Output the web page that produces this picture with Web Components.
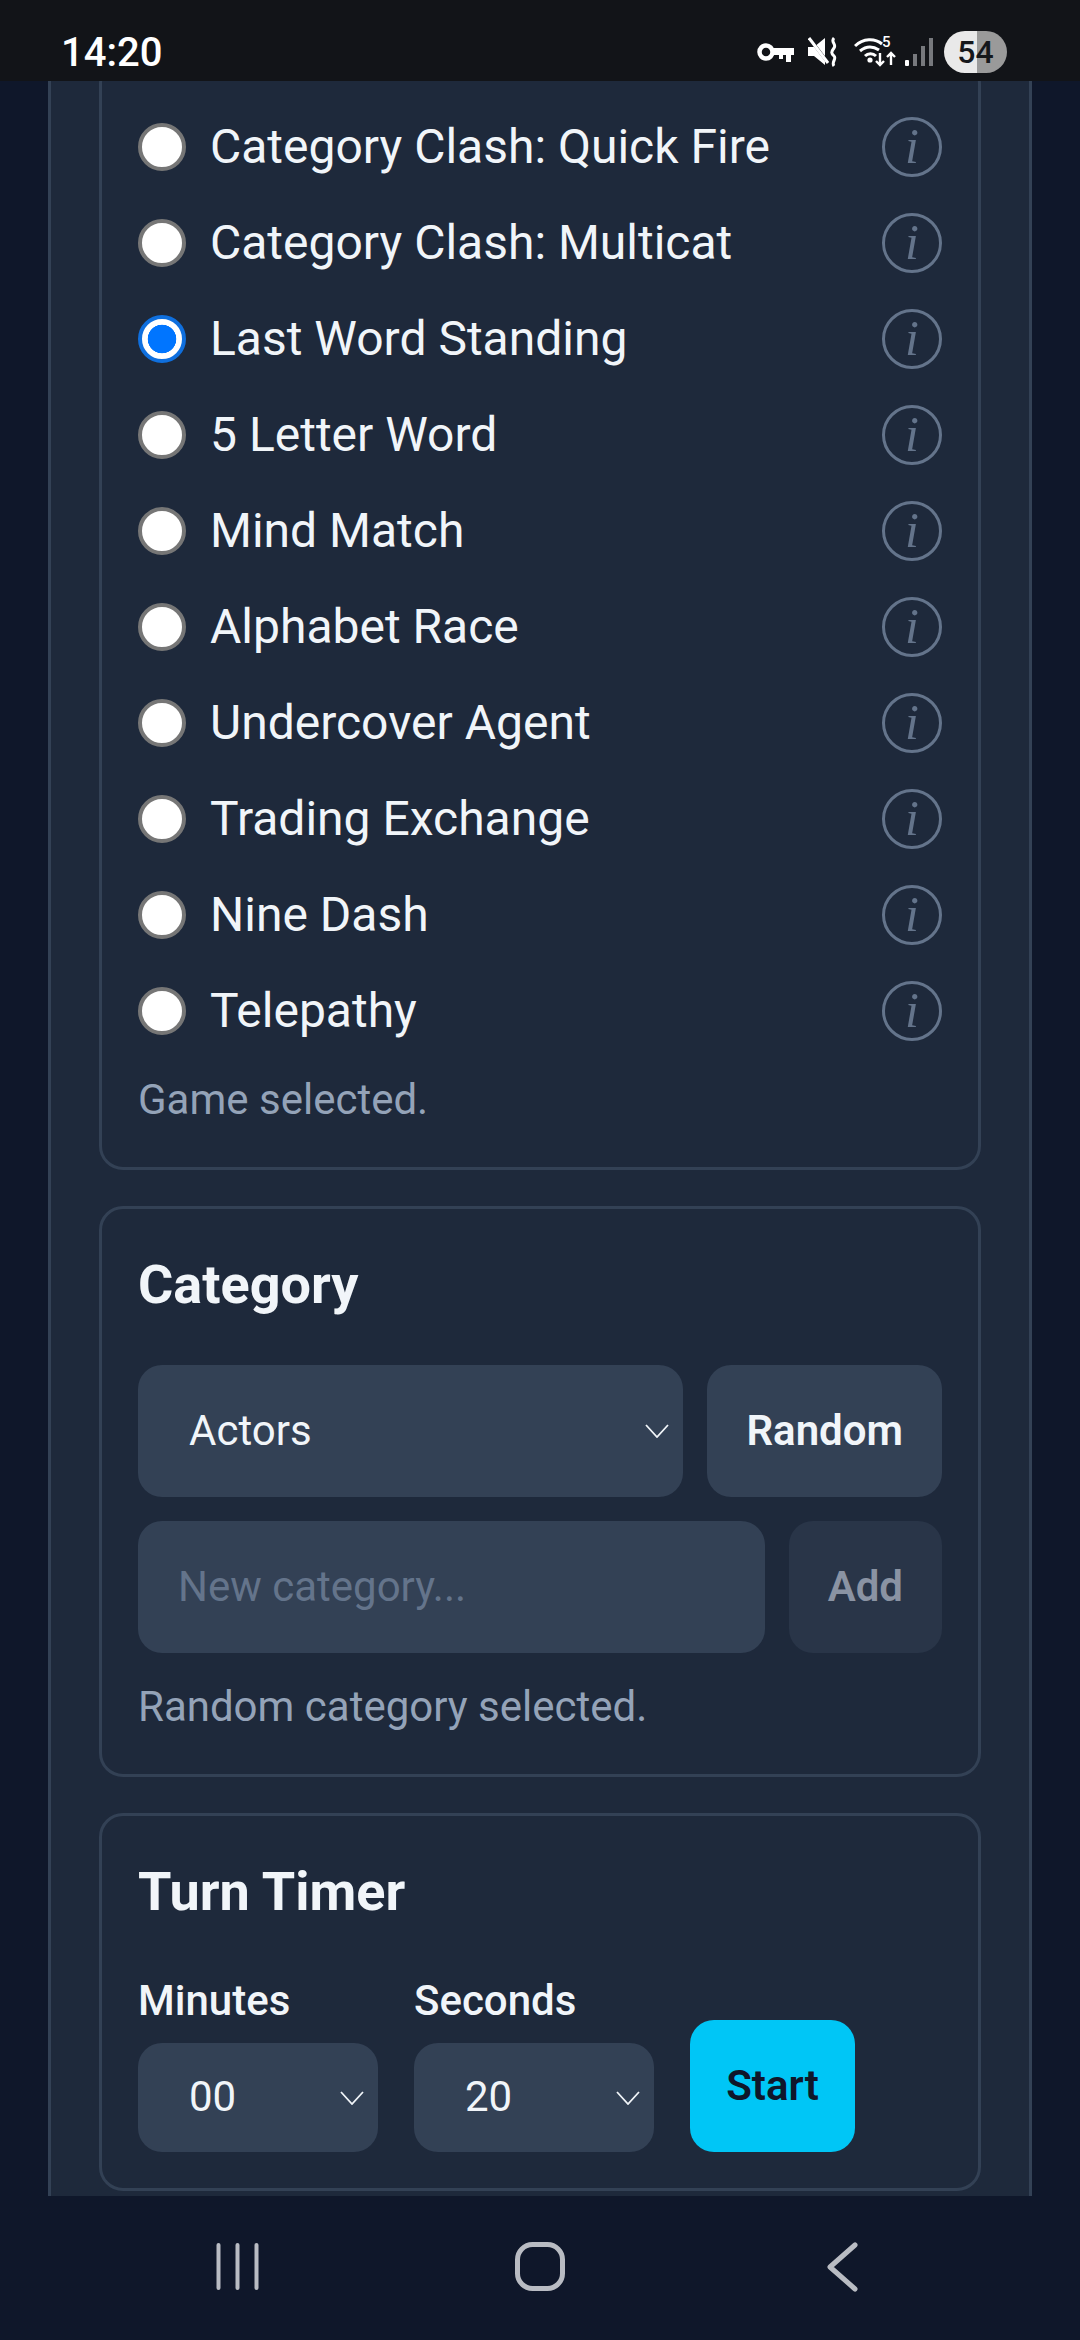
<!DOCTYPE html>
<html>
<head>
<meta charset="utf-8">
<title>Game setup</title>
<style>
	html, body {
		margin: 0;
		height: 2340px;
		overflow: hidden;
		background: #0f172a;
		font-family: Roboto, "Liberation Sans", sans-serif;
	}

	body {
		display: flex;
		flex-direction: column;
	}
</style>
</head>
<body>
	<status-bar></status-bar>
	<setup-screen>
		<info-card note="Game selected.">
			<game-option>Category Clash: Quick Fire</game-option>
			<game-option>Category Clash: Multicat</game-option>
			<game-option checked>Last Word Standing</game-option>
			<game-option>5 Letter Word</game-option>
			<game-option>Mind Match</game-option>
			<game-option>Alphabet Race</game-option>
			<game-option>Undercover Agent</game-option>
			<game-option>Trading Exchange</game-option>
			<game-option>Nine Dash</game-option>
			<game-option>Telepathy</game-option>
		</info-card>
		<info-card heading="Category" note="Random category selected.">
			<category-form></category-form>
		</info-card>
		<info-card heading="Turn Timer">
			<turn-timer></turn-timer>
		</info-card>
	</setup-screen>
	<nav-bar></nav-bar>

<script>
class StatusBar extends HTMLElement {
	constructor() {
		super();
		this.attachShadow({ mode: 'open' });
	}

	connectedCallback() {
		this.shadowRoot.innerHTML = `
			<style>
				:host {
					display: flex;
					flex: none;
					align-items: center;
					height: 81px;
					padding: 23px 73px 0 61px;
					box-sizing: border-box;
					background: #121418;
					color: #fff;
				}

				.time {
					font-size: 40px;
					font-weight: 500;
					flex: 1;
				}

				svg {
					display: block;
				}

				.icons {
					display: flex;
					align-items: center;
				}

				.wifi {
					position: relative;
					width: 42px;
					height: 34px;
					margin-right: 9px;
				}

				/* wifi generation digit sits over the icon corner */
				.wifi span {
					position: absolute;
					left: 28px;
					top: 0;
					font-size: 15px;
					font-weight: 500;
					line-height: 15px;
				}

				.battery {
					width: 63px;
					height: 42px;
					margin-left: 11px;
					border-radius: 21px;
					background: linear-gradient(90deg, #e9e9e9 52%, #9a9a9a 52%);
					color: #15171b;
					font-size: 32px;
					font-weight: 500;
					line-height: 42px;
					text-align: center;
				}
			</style>
			<span class="time">14:20</span>
			<div class="icons">
				<svg width="37" height="19" viewBox="0 0 37 19" style="margin-right:14px">
					<circle cx="9" cy="9" r="6.500" fill="none" stroke="#fff" stroke-width="4.500"/>
					<path d="M15 5h22v7h-3v7h-5v-7h-3v4h-4v-4h-7z" fill="#fff"/>
				</svg>
				<svg width="30" height="30" viewBox="0 0 30 30" style="margin-right:16px">
					<path d="M0 10h6l11-9v27L6 19H0z" fill="#fff"/>
					<path d="M2 2l19 25" stroke="#121418" stroke-width="3"/>
					<path d="M1 1l19 25" stroke="#fff" stroke-width="3"/>
					<path d="M26 1c-4 4 3 6 0 10s-3 5 0 8-3 6 0 10" fill="none" stroke="#fff" stroke-width="3"/>
				</svg>
				<div class="wifi">
					<svg width="42" height="34" viewBox="0 0 42 34">
						<path d="M1 11c8-8 20-8 27-2M6 16c6-5 13-5 19-1M11 21c3-3 8-3 11 0" fill="none" stroke="#fff" stroke-width="3"/>
						<circle cx="16" cy="25" r="2.600" fill="#fff"/>
						<path d="M26 18v12M22 26l4 4 4-4M37 30V18M33 22l4-4 4 4" fill="none" stroke="#fff" stroke-width="2.400"/>
					</svg>
					<span>5</span>
				</div>
				<svg width="28" height="30" viewBox="0 0 28 30">
					<rect x="0" y="23" width="4" height="6" rx="1" fill="#fff"/>
					<rect x="8" y="17" width="4" height="12" fill="#77797d"/>
					<rect x="16" y="9" width="4" height="20" fill="#77797d"/>
					<rect x="24" y="1" width="4" height="28" fill="#77797d"/>
				</svg>
				<div class="battery">54</div>
			</div>
		`;
	}
}

class SetupScreen extends HTMLElement {
	constructor() {
		super();
		this.attachShadow({ mode: 'open' });
	}

	connectedCallback() {
		// the list is scrolled, so the first card starts above the fold
		this.shadowRoot.innerHTML = `
			<style>
				:host {
					display: block;
					flex: none;
					height: 2115px;
					overflow: hidden;
					padding: 0 48px;
					box-sizing: border-box;
					background: #0f172a;
				}

				.panel {
					display: flex;
					flex-direction: column;
					gap: 36px;
					margin-top: -21px;
					padding: 0 48px 60px;
					background: #1e293b;
					border: 3px solid #334155;
					border-top: 0;
				}
			</style>
			<div class="panel"><slot></slot></div>
		`;
	}
}

class InfoCard extends HTMLElement {
	constructor() {
		super();
		this.attachShadow({ mode: 'open' });
	}

	connectedCallback() {
		const heading = this.getAttribute('heading');
		const note = this.getAttribute('note');

		this.shadowRoot.innerHTML = `
			<style>
				:host {
					display: block;
					padding: 36px;
					background: #1e293b;
					border: 3px solid #334155;
					border-radius: 24px;
					color: #f1f5f9;
				}

				h2 {
					margin: 0 0 42px;
					padding-top: 1px;
					font-size: 54px;
					font-weight: 700;
					line-height: 77px;
				}

				p {
					margin: 12px 0 2px;
					color: #94a3b8;
					font-size: 42px;
					line-height: 58px;
				}

				:host([heading]) p {
					margin-top: 25px;
				}
			</style>
			${heading ? `<h2>${heading}</h2>` : ''}
			<slot></slot>
			${note ? `<p>${note}</p>` : ''}
		`;
	}
}

class GameOption extends HTMLElement {
	constructor() {
		super();
		this.attachShadow({ mode: 'open' });
	}

	connectedCallback() {
		this.shadowRoot.innerHTML = `
			<style>
				:host {
					display: flex;
					align-items: center;
					gap: 24px;
					height: 96px;
					font-size: 48px;
				}

				.radio {
					flex: none;
					width: 48px;
					height: 48px;
					box-sizing: border-box;
					border: 4px solid #767676;
					border-radius: 50%;
					background: #fff;
				}

				:host([checked]) .radio {
					border-color: #0f6fde;
					background: radial-gradient(circle, #0075ff 0 14px, #fff 14.6px);
				}

				.label {
					flex: 1;
					padding-bottom: 2px;
				}

				.info {
					flex: none;
					width: 60px;
					height: 60px;
					box-sizing: border-box;
					border: 3px solid #64748b;
					border-radius: 50%;
					color: #64748b;
					font: italic 50px/52px "Liberation Serif", serif;
					text-align: center;
				}
			</style>
			<span class="radio"></span>
			<span class="label"><slot></slot></span>
			<span class="info">i</span>
		`;
	}
}

class PickBox extends HTMLElement {
	constructor() {
		super();
		this.attachShadow({ mode: 'open' });
	}

	connectedCallback() {
		this.shadowRoot.innerHTML = `
			<style>
				:host {
					display: flex;
					align-items: center;
					box-sizing: border-box;
					padding: 0 14px 0 51px;
					background: #334155;
					border-radius: 24px;
					color: #f1f5f9;
					font-size: 42px;
				}

				.text {
					flex: 1;
					padding-bottom: 2px;
				}

				svg {
					display: block;
					flex: none;
				}
			</style>
			<span class="text"><slot></slot></span>
			<svg width="24" height="14" viewBox="0 0 24 14">
				<path d="M1 1l11 12L23 1" fill="none" stroke="#f1f5f9" stroke-width="1.8"/>
			</svg>
		`;
	}
}

class ActionButton extends HTMLElement {
	constructor() {
		super();
		this.attachShadow({ mode: 'open' });
	}

	connectedCallback() {
		this.shadowRoot.innerHTML = `
			<style>
				:host {
					display: flex;
					flex: none;
					align-items: center;
					justify-content: center;
					box-sizing: border-box;
					padding: 0 39px 2px;
					background: #334155;
					border-radius: 24px;
					color: #f1f5f9;
					font-size: 42px;
					font-weight: 600;
				}

				:host([disabled]) {
					background: #293548;
					color: #8a93a3;
				}

				:host([primary]) {
					background: #00c6f6;
					color: #0f172a;
				}
			</style>
			<slot></slot>
		`;
	}
}

class CategoryForm extends HTMLElement {
	constructor() {
		super();
		this.attachShadow({ mode: 'open' });
	}

	connectedCallback() {
		this.shadowRoot.innerHTML = `
			<style>
				:host {
					display: grid;
					gap: 24px;
				}

				.row {
					display: flex;
					gap: 24px;
					height: 132px;
				}

				pick-box {
					flex: 1;
				}

				.field {
					flex: 1;
					display: flex;
					align-items: center;
					padding: 0 40px 2px;
					background: #334155;
					border-radius: 24px;
					color: #64748b;
					font-size: 42px;
				}
			</style>
			<div class="row">
				<pick-box>Actors</pick-box>
				<action-button>Random</action-button>
			</div>
			<div class="row">
				<div class="field">New category...</div>
				<action-button disabled>Add</action-button>
			</div>
		`;
	}
}

class TurnTimer extends HTMLElement {
	constructor() {
		super();
		this.attachShadow({ mode: 'open' });
	}

	connectedCallback() {
		this.shadowRoot.innerHTML = `
			<style>
				:host {
					display: flex;
					align-items: flex-end;
					gap: 36px;
				}

				label {
					display: block;
					margin-bottom: 13px;
					font-size: 42px;
					font-weight: 500;
					line-height: 58px;
				}

				pick-box {
					width: 240px;
					height: 109px;
				}

				action-button {
					width: 165px;
					height: 132px;
					padding: 0 0 2px;
				}
			</style>
			<div>
				<label>Minutes</label>
				<pick-box>00</pick-box>
			</div>
			<div>
				<label>Seconds</label>
				<pick-box>20</pick-box>
			</div>
			<action-button primary>Start</action-button>
		`;
	}
}

class NavBar extends HTMLElement {
	constructor() {
		super();
		this.attachShadow({ mode: 'open' });
	}

	connectedCallback() {
		this.shadowRoot.innerHTML = `
			<style>
				:host {
					display: block;
					flex: none;
					height: 144px;
					background: #0f172a;
				}

				svg {
					display: block;
				}
			</style>
			<svg width="1080" height="144" viewBox="0 0 1080 144" fill="none" stroke="#b9bcc3" stroke-linecap="round">
				<path d="M218.500 49v43M237.500 49v43M256.500 49v43" stroke-width="4"/>
				<rect x="517.500" y="48.500" width="45" height="44" rx="15" stroke-width="5"/>
				<path d="M855 49l-25 22 25 22" stroke-width="5" stroke-linejoin="round"/>
			</svg>
		`;
	}
}

customElements.define('status-bar', StatusBar);
customElements.define('setup-screen', SetupScreen);
customElements.define('info-card', InfoCard);
customElements.define('game-option', GameOption);
customElements.define('pick-box', PickBox);
customElements.define('action-button', ActionButton);
customElements.define('category-form', CategoryForm);
customElements.define('turn-timer', TurnTimer);
customElements.define('nav-bar', NavBar);
</script>
</body>
</html>
